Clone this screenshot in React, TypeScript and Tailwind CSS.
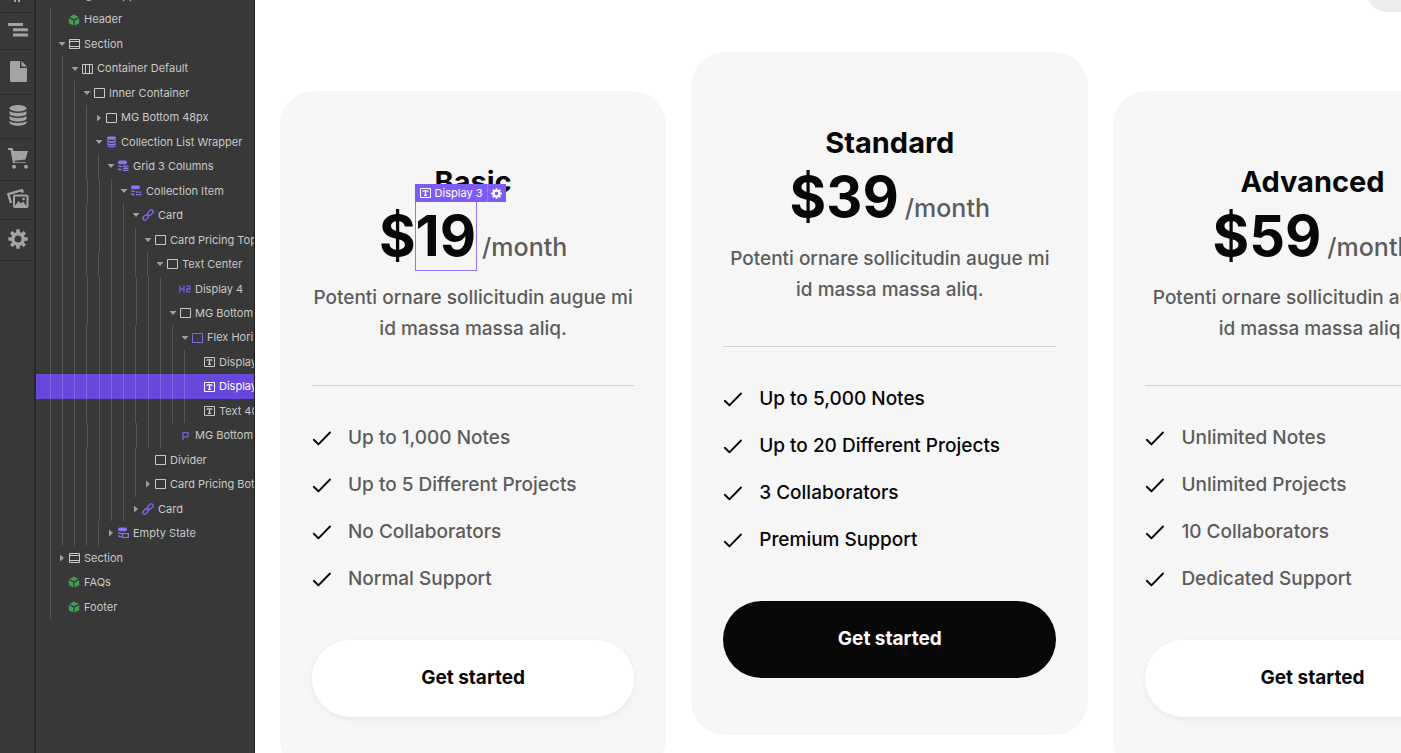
import type { ReactNode } from "react";
import clsx from "clsx";

type IconKind =
  | "component"
  | "section"
  | "container"
  | "box"
  | "flex"
  | "list"
  | "grid"
  | "item"
  | "empty"
  | "link"
  | "heading"
  | "paragraph"
  | "text";

type TreeNode = {
  label: string;
  depth: number;
  icon: IconKind;
  caret?: "open" | "closed";
  selected?: boolean;
};

type Plan = {
  name: string;
  price: string;
  features: string[];
  featured?: boolean;
  selected?: boolean;
};

const MAX_DEPTH = 12;
const MAX_INDENT = 147;

const TREE: TreeNode[] = [
  { label: "Page Wrapper", depth: 0, icon: "box", caret: "open" },
  { label: "Header", depth: 1, icon: "component" },
  { label: "Section", depth: 1, icon: "section", caret: "open" },
  { label: "Container Default", depth: 2, icon: "container", caret: "open" },
  { label: "Inner Container", depth: 3, icon: "box", caret: "open" },
  { label: "MG Bottom 48px", depth: 4, icon: "box", caret: "closed" },
  { label: "Collection List Wrapper", depth: 4, icon: "list", caret: "open" },
  { label: "Grid 3 Columns", depth: 5, icon: "grid", caret: "open" },
  { label: "Collection Item", depth: 6, icon: "item", caret: "open" },
  { label: "Card", depth: 7, icon: "link", caret: "open" },
  { label: "Card Pricing Top", depth: 8, icon: "box", caret: "open" },
  { label: "Text Center", depth: 9, icon: "box", caret: "open" },
  { label: "Display 4", depth: 10, icon: "heading" },
  { label: "MG Bottom 16px", depth: 10, icon: "box", caret: "open" },
  { label: "Flex Horizontal", depth: 11, icon: "flex", caret: "open" },
  { label: "Display 3", depth: 12, icon: "text" },
  { label: "Display 3", depth: 12, icon: "text", selected: true },
  { label: "Text 400", depth: 12, icon: "text" },
  { label: "MG Bottom 0", depth: 10, icon: "paragraph" },
  { label: "Divider", depth: 8, icon: "box" },
  { label: "Card Pricing Bottom", depth: 8, icon: "box", caret: "closed" },
  { label: "Card", depth: 7, icon: "link", caret: "closed" },
  { label: "Empty State", depth: 5, icon: "empty", caret: "closed" },
  { label: "Section", depth: 1, icon: "section", caret: "closed" },
  { label: "FAQs", depth: 1, icon: "component" },
  { label: "Footer", depth: 1, icon: "component" },
];

const PLANS: Plan[] = [
  {
    name: "Basic",
    price: "19",
    features: ["Up to 1,000 Notes", "Up to 5 Different Projects", "No Collaborators", "Normal Support"],
    selected: true,
  },
  {
    name: "Standard",
    price: "39",
    features: ["Up to 5,000 Notes", "Up to 20 Different Projects", "3 Collaborators", "Premium Support"],
    featured: true,
  },
  {
    name: "Advanced",
    price: "59",
    features: ["Unlimited Notes", "Unlimited Projects", "10 Collaborators", "Dedicated Support"],
  },
];

const GearIcon = ({ className }: { className: string }) => (
  <svg viewBox="0 0 20 20" className={className} aria-hidden="true">
    <g fill="currentColor">
      {[0, 45, 90, 135].map((angle) => (
        <rect key={angle} x="8.2" y="0.3" width="3.6" height="19.4" rx="0.6" transform={`rotate(${angle} 10 10)`} mask="url(#gear-hole)" />
      ))}
    </g>
    <mask id="gear-hole" maskUnits="userSpaceOnUse" x="-5" y="-5" width="30" height="30">
      <rect x="-5" y="-5" width="30" height="30" fill="#fff" />
      <circle cx="10" cy="10" r="4" fill="#000" />
    </mask>
    <circle cx="10" cy="10" r="5.2" fill="none" stroke="currentColor" strokeWidth="3.4" />
  </svg>
);

const RAIL: { label: string; height: string; icon: ReactNode }[] = [
  {
    label: "Navigator",
    height: "h-[37px]",
    icon: (
      <svg viewBox="0 0 20 14" className="h-[14px] w-5" fill="currentColor">
        <path d="M0 0h15v3H0zM5 5.3h15v3H5zM5 10.6h15v3H5z" />
      </svg>
    ),
  },
  {
    label: "Pages",
    height: "h-[45px]",
    icon: (
      <svg viewBox="0 0 17 21" className="h-[21px] w-[17px]" fill="currentColor">
        <path d="M0 1.2Q0 0 1.2 0H10v7h7v12.800q0 1.200-1.200 1.200H1.200Q0 21 0 19.800z" />
        <path d="M11.500 0 17 5.500h-5.500z" />
      </svg>
    ),
  },
  {
    label: "CMS",
    height: "h-11",
    icon: (
      <svg viewBox="0 0 18 21" className="h-[21px] w-[18px]" fill="currentColor">
        <ellipse cx="9" cy="3.200" rx="8.500" ry="3.200" />
        <path d="M.5 6c2 2.600 15 2.600 17 0v2.800c-1.500 3.600-15.500 3.600-17 0zM.5 11c2 2.600 15 2.600 17 0v2.800c-1.500 3.600-15.500 3.600-17 0zM.5 16c2 2.600 15 2.600 17 0v1.800c-1.500 4-15.500 4-17 0z" />
      </svg>
    ),
  },
  {
    label: "Ecommerce",
    height: "h-[42px]",
    icon: (
      <svg viewBox="0 0 20 21" className="h-[21px] w-5" fill="currentColor">
        <path d="M0 0h4.500l1 3H20l-2.500 8.500-11 1.200.5 1.500h11V15H5L2.500 2H0z" />
        <circle cx="6" cy="18.700" r="2" />
        <circle cx="18" cy="18.700" r="2" />
      </svg>
    ),
  },
  {
    label: "Assets",
    height: "h-[39px]",
    icon: (
      <svg viewBox="0 0 22 20" className="h-5 w-[22px]" fill="none" stroke="currentColor" strokeWidth="2">
        <path d="M4 14 1.300 5.200 15 1.200l.8 2.500" strokeWidth="2.400" />
        <rect x="7" y="6.500" width="13.500" height="11.500" rx="1" />
        <path d="m8 17 3.500-5 2.500 2.500 2-2 3.500 4.500z" fill="currentColor" stroke="none" />
        <circle cx="16.500" cy="10" r="1.300" fill="currentColor" stroke="none" />
      </svg>
    ),
  },
  { label: "Settings", height: "h-[41px]", icon: <GearIcon className="size-5" /> },
];

const NodeIcon = ({ kind }: { kind: IconKind }) => {
  switch (kind) {
    case "component":
      return (
        <svg viewBox="0 0 12 12" className="size-3 text-[#3f9d54]" fill="currentColor">
          <path d="M6 .5 10.600 2.900 6 5.300 1.400 2.900zM.8 4 5.400 6.400v5.200L.8 9.200zM11.200 4v5.200l-4.600 2.400V6.400z" />
        </svg>
      );
    case "section":
      return (
        <svg viewBox="0 0 12 12" className="size-3" fill="none" stroke="currentColor">
          <path d="M1.500 1.500h10v9h-10zM1.500 3.500h10M1.500 8.500h10" />
        </svg>
      );
    case "container":
      return (
        <svg viewBox="0 0 12 12" className="size-3" fill="none" stroke="currentColor">
          <path d="M1.500 1.500h10v9h-10zM4.500 1.500v9M8.500 1.500v9" />
        </svg>
      );
    case "box":
    case "flex":
      return (
        <svg viewBox="0 0 12 12" className={clsx("size-3", kind === "flex" && "text-[#8467ea]")} fill="none" stroke="currentColor">
          <path d="M1.500 1.500h10v9h-10z" />
        </svg>
      );
    case "list":
      return (
        <svg viewBox="0 0 12 12" className="size-3 text-[#8f74f8]" fill="currentColor">
          <rect x="2" y=".6" width="9" height="3.200" rx="1.600" />
          <path d="M2 4.300q4.500 1.800 9 0v1.400q-4.500 2.600-9 0zM2 7q4.500 1.800 9 0v1.400q-4.500 2.600-9 0zM2 9.600q4.500 1.800 9 0v.6q-4.500 2.800-9 0z" />
        </svg>
      );
    case "grid":
    case "item":
    case "empty":
      return (
        <svg viewBox="0 0 12 12" className="size-3 text-[#8f74f8]" fill="currentColor">
          <rect x="1" y=".6" width="9" height="3.600" rx="1.800" />
          <path d="M1 5q1.500 1 4 1v1.200q-2.500 0-4-1zM1 8q1.500 1 3.500 1v1.500Q2.500 10.500 1 9.500z" />
          {kind === "grid" && <path d="M6 5.500h5.500v1.300H6zM6 7.600h5.500v1.300H6zM6 9.700h5.500V11H6z" />}
          {kind === "item" && <path d="M6 6.500h2.400v1.300H6zM9 6.500h2.500v1.300H9zM6 9h2.400v1.300H6zM9 9h2.500v1.300H9z" />}
          {kind === "empty" && <path d="M5.700 6.500h5.600v4H5.700z" fill="none" stroke="currentColor" strokeWidth="1.200" />}
        </svg>
      );
    case "link":
      return (
        <svg viewBox="0 0 12 12" className="size-3 text-[#8467ea]" fill="none" stroke="currentColor" strokeWidth="1.300">
          <rect x="-2.600" y="-1.900" width="6" height="3.800" rx="1.900" transform="translate(8.200 3.800) rotate(-45)" />
          <rect x="-3.400" y="-1.900" width="6" height="3.800" rx="1.900" transform="translate(3.800 8.200) rotate(-45)" />
        </svg>
      );
    case "heading":
      return (
        <svg viewBox="0 0 12 12" className="size-3 text-[#7a5fd8]" fill="none" stroke="currentColor" strokeWidth="1.300">
          <path d="M1 2.500v7M5 2.500v7M1 6h4M7 3.100h4V6H7.600v2.900h3.900" />
        </svg>
      );
    case "paragraph":
      return (
        <svg viewBox="0 0 12 12" className="size-3 text-[#7a5fd8]" fill="none" stroke="currentColor" strokeWidth="1.300">
          <path d="M4 10V2.600h5v4.200H4" />
        </svg>
      );
    case "text":
      return (
        <svg viewBox="0 0 12 12" className="size-3" fill="none" stroke="currentColor">
          <path d="M1.500 1.500h10v9h-10z" />
          <path d="M4 5V3.800h5V5M5 8.500h3" />
          <path d="M6.500 3.500v5" strokeWidth="1.500" />
        </svg>
      );
  }
};

const TreeRow = ({ node }: { node: TreeNode }) => (
  <li className={clsx("flex", node.selected ? "bg-[#6747dc] text-white" : "text-[#c8c8c8]")}>
    <button type="button" className="flex items-center pl-2 text-[11px] whitespace-nowrap">
      <span className="flex h-full shrink-0" style={{ width: Math.round((node.depth * MAX_INDENT) / MAX_DEPTH) }}>
        {Array.from({ length: node.depth }, (_, i) => (
          <span key={i} className="flex flex-1 justify-center">
            <span className={clsx("w-px", node.selected ? "bg-[#8067e2]" : "bg-[#565656]")} />
          </span>
        ))}
      </span>
      <span className="flex w-3 shrink-0 justify-center text-[#a0a0a0]">
        {node.caret && (
          <svg viewBox="0 0 8 8" className={clsx("size-2", node.caret === "closed" && "-rotate-90")} fill="currentColor">
            <path d="M.5 2h7L4 6z" />
          </svg>
        )}
      </span>
      <NodeIcon kind={node.icon} />
      <span className="ml-1">{node.label}</span>
    </button>
  </li>
);

const SelectionTag = () => (
  <span className="absolute bottom-full -left-px flex h-[18px] items-stretch bg-[#7c5cf6] text-[11px] font-normal whitespace-nowrap text-white">
    <span className="flex items-center gap-1 px-1">
      <NodeIcon kind="text" />
      Display 3
    </span>
    <button type="button" aria-label="Element settings" className="flex w-[19px] items-center justify-center border-l border-[#9478fa]">
      <GearIcon className="size-[11px]" />
    </button>
  </span>
);

const PricingCard = ({ plan }: { plan: Plan }) => (
  <article
    className={clsx(
      "rounded-[34px] bg-[#f6f6f6] px-8 pt-[71px] pb-[57px] text-[19px] font-medium",
      plan.featured ? "mb-[39px]" : "mt-[39px]",
    )}
  >
    <h2 className="text-center text-[29px] leading-10 font-bold text-[#080808]">{plan.name}</h2>
    <div className="flex items-baseline justify-center text-[56px] leading-[68px] font-bold text-[#080808]">
      <span>$</span>
      <span className={clsx("relative", plan.selected && "outline outline-[#8f74f8]")}>
        {plan.price}
        {plan.selected && <SelectionTag />}
      </span>
      <span className="ml-1.5 text-[25px] leading-8 font-medium text-[#5c5c5c]">/month</span>
    </div>
    <p className="mt-3 text-center leading-[31px] text-[#5c5c5c]">
      Potenti ornare sollicitudin augue mi
      <br />
      id massa massa aliq.
    </p>
    <hr className="mt-[41px] border-[#d2d2d2]" />
    <ul className={clsx("mt-[37px] flex flex-col gap-[17px] leading-[30px]", plan.featured ? "text-[#080808]" : "text-[#5c5c5c]")}>
      {plan.features.map((feature) => (
        <li key={feature} className="flex items-center gap-4">
          <svg viewBox="0 0 20 16" className="h-4 w-5 text-[#080808]" fill="none" stroke="currentColor" strokeWidth="1.900" strokeLinecap="round" strokeLinejoin="round">
            <path d="m1.800 9.800 4.600 4.500L18 2.500" />
          </svg>
          {feature}
        </li>
      ))}
    </ul>
    <button
      type="button"
      className={clsx(
        "mt-[46px] h-[77px] w-full rounded-full font-bold",
        plan.featured ? "bg-[#080808] text-white" : "bg-white text-[#080808] shadow-[0_2px_6px_rgba(0,0,0,0.06)]",
      )}
    >
      Get started
    </button>
  </article>
);

const App = () => (
  <div className="flex h-screen overflow-hidden bg-white font-['Inter',sans-serif]">
    <nav aria-label="Tools" className="flex w-9 shrink-0 flex-col border-r-2 border-[#272727] bg-[#383838] text-[#a3a3a3]">
      <div className="flex h-[13px] shrink-0 justify-center border-b border-[#2b2b2b]">
        <svg viewBox="0 0 8 3" className="h-[3px] w-2" fill="currentColor">
          <path d="M1 0h2v2H1zM5 0h2v2H5z" />
        </svg>
      </div>
      {RAIL.map((tool) => (
        <button
          key={tool.label}
          type="button"
          aria-label={tool.label}
          className={clsx("flex shrink-0 items-center justify-center border-b border-[#2b2b2b] pb-0.5 pl-0.5", tool.height)}
        >
          {tool.icon}
        </button>
      ))}
    </nav>

    <aside className="w-[219px] shrink-0 overflow-hidden border-r border-[#1c1c1c] bg-[#383838]">
      {/* the tree is scrolled a little past its first row */}
      <ul className="-mt-[17px] grid h-[636px] auto-rows-fr">
        {TREE.map((node, i) => (
          <TreeRow key={i} node={node} />
        ))}
      </ul>
    </aside>

    <main className="relative min-w-0 flex-1 overflow-hidden">
      <div className="absolute -top-8 -right-16 h-11 w-[99px] rounded-full bg-[#ececec]" />
      <div className="grid w-[110%] grid-cols-[386fr_397fr_398fr] gap-[25px] pt-[52px] pr-1 pl-[25px]">
        {PLANS.map((plan) => (
          <PricingCard key={plan.name} plan={plan} />
        ))}
      </div>
    </main>
  </div>
);

export default App;
